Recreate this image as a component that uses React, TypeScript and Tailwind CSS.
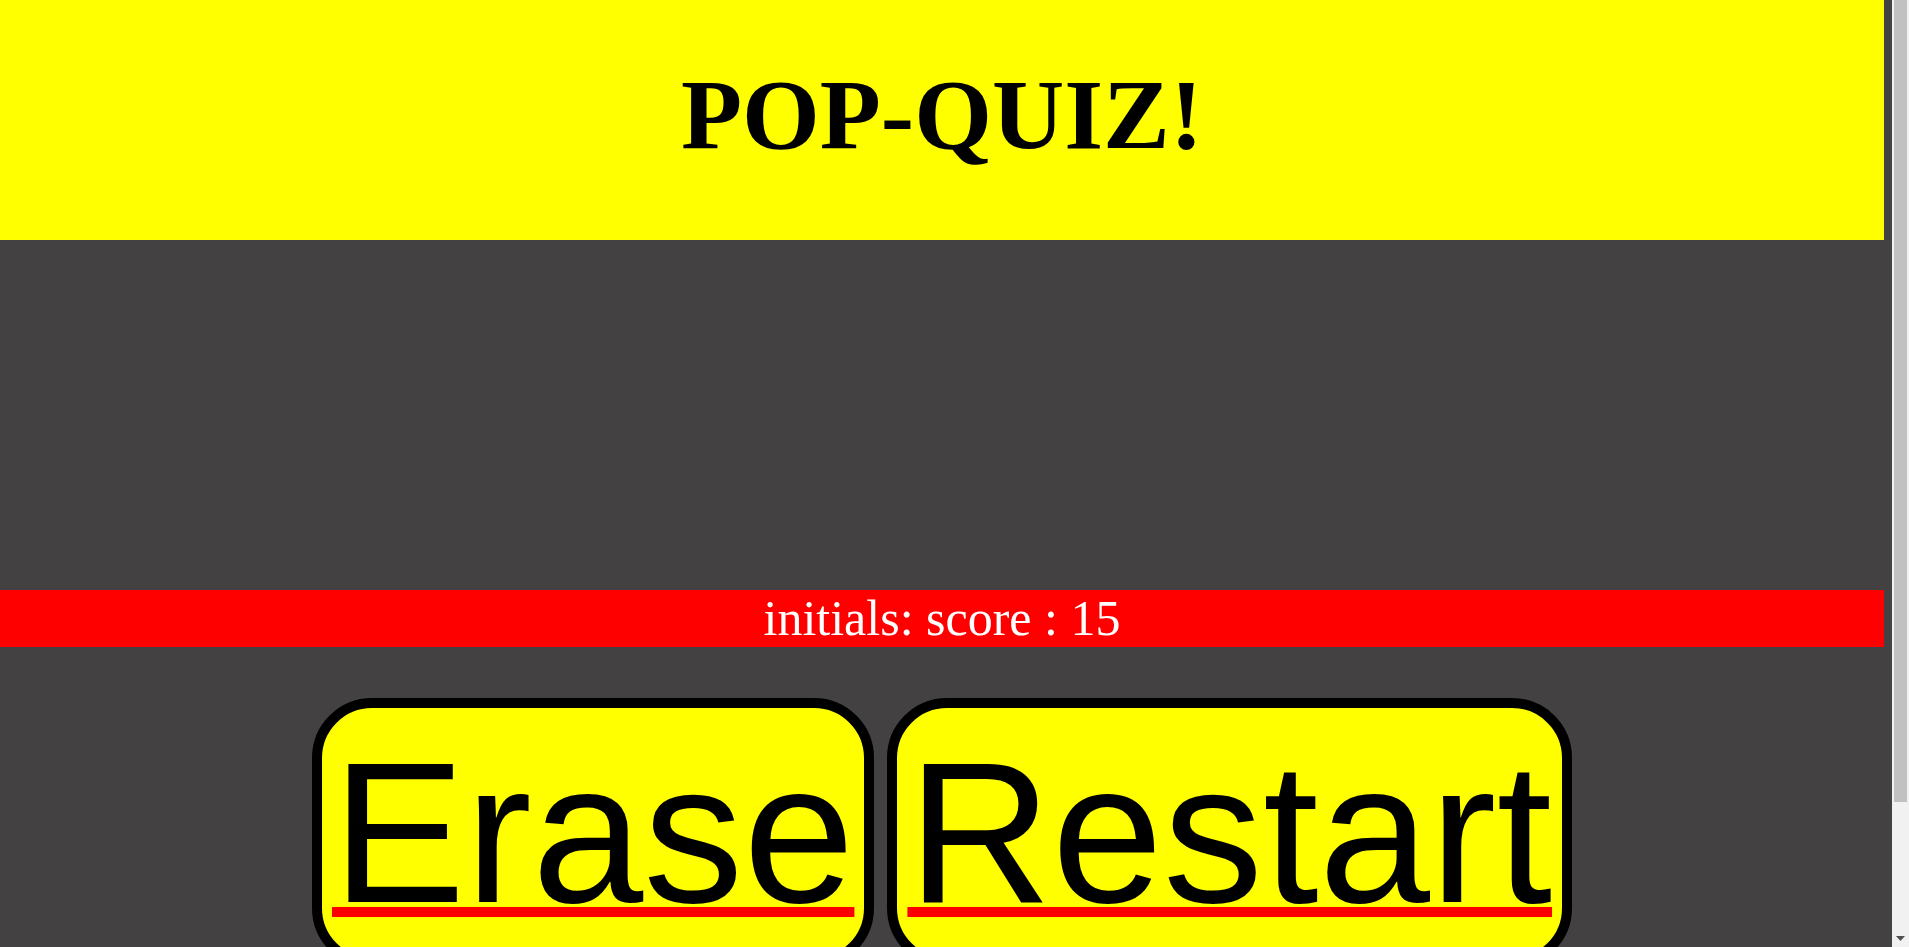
import React from 'react';

function QuizButton({ label }: { label: string }) {
  return (
    <button className="cursor-pointer rounded-[60px] border-[10px] border-black bg-[#ffff00] p-[10px] font-['Liberation_Sans',Arial,sans-serif] text-[200px] leading-[230px] text-black underline decoration-[#ff0000] decoration-[10px] underline-offset-[5px]">
      {label}
    </button>
  );
}

// classic browser scrollbar look, the page is taller than the window
function Scrollbar() {
  return (
    <div className="sticky top-0 flex h-screen w-[17px] shrink-0 flex-col self-start bg-[#f1f1f1]">
      <div className="mx-[2px] h-[802px] bg-[#c1c1c1]" />
      <div className="flex-1" />
      <div className="flex h-[17px] items-center justify-center">
        <svg width="9" height="5" viewBox="0 0 9 5">
          <polygon points="0,0 9,0 4.5,5" fill="#505050" />
        </svg>
      </div>
    </div>
  );
}

export default function App() {
  return (
    <div className="flex min-h-screen">
      <div className="min-w-0 flex-1 bg-[#434142] pb-[130px]">
        <header className="mr-2 h-[240px] bg-[#ffff00] pt-[57px] text-center">
          <h1 className="font-['Liberation_Serif','Times_New_Roman',serif] text-[100px] font-bold leading-[115px] text-black">
            POP-QUIZ!
          </h1>
        </header>

        {/* question area (empty once the quiz is over) */}
        <div className="h-[350px]" />

        <div className="mr-2 bg-[#ff0000] text-center font-['Liberation_Serif','Times_New_Roman',serif] text-[50px] leading-[57px] text-white">
          initials: score : 15
        </div>

        <div className="mr-2 mt-[51px] flex justify-center gap-[13px]">
          <QuizButton label="Erase" />
          <QuizButton label="Restart" />
        </div>
      </div>
      <Scrollbar />
    </div>
  );
}
